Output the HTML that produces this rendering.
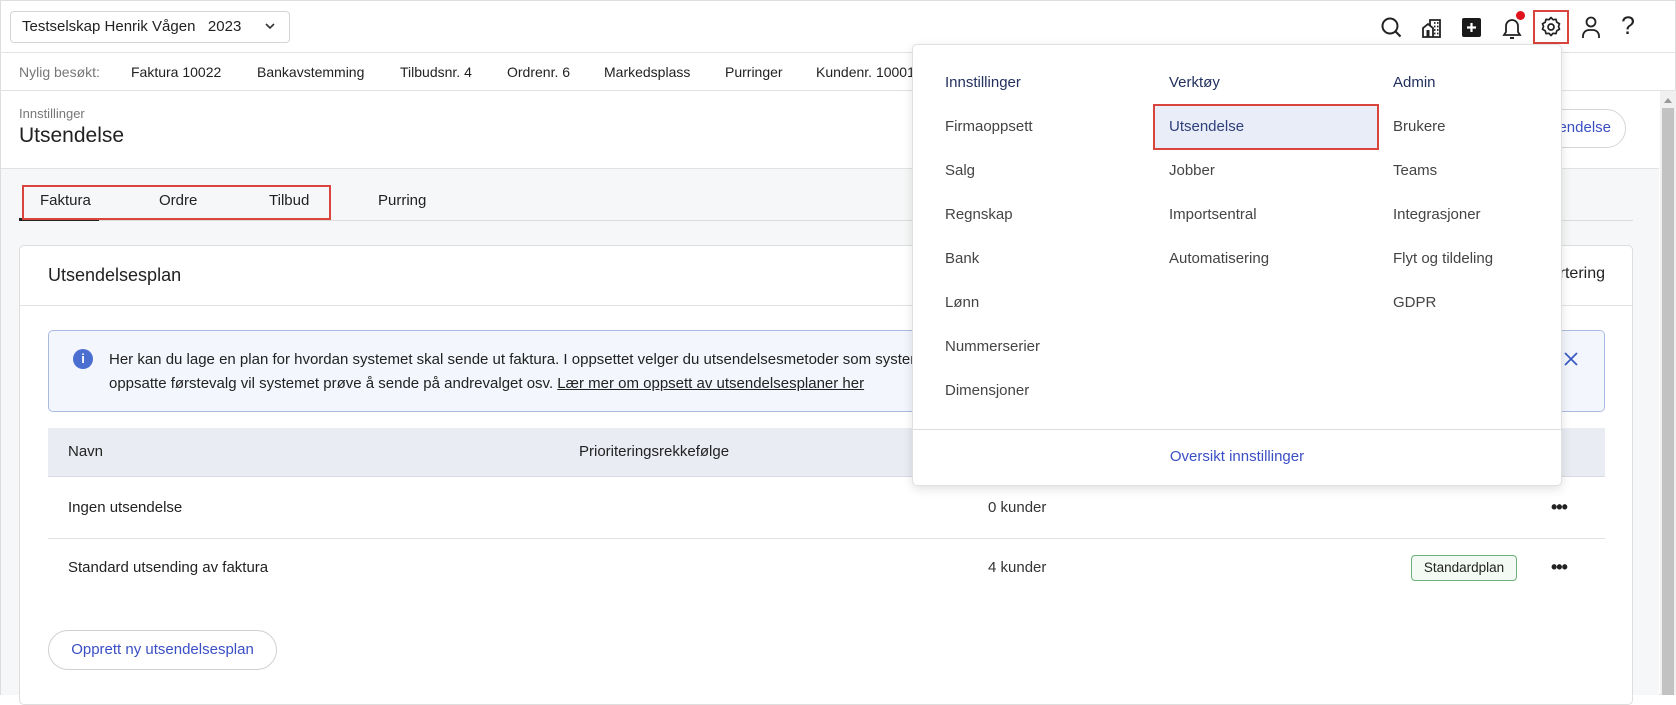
<!DOCTYPE html>
<html><head><meta charset="utf-8"><style>
*{margin:0;padding:0;box-sizing:border-box}
body{width:1676px;height:695px;overflow:hidden;font-family:"Liberation Sans",sans-serif;color:#222;background:#fff;position:relative;font-size:15px}
.a{position:absolute;white-space:nowrap}
</style></head><body>
<div class="a" style="left:0;top:0;width:1676px;height:695px;border:1px solid #ddd"></div>
<div class="a" style="left:10px;top:11px;width:280px;height:32px;border:1px solid #d4d4d4;border-radius:4px"></div>
<div class="a" style="left:22px;top:18px;font-size:15px">Testselskap Henrik Vågen&nbsp;&nbsp; 2023</div>
<svg class="a" style="left:265px;top:22px" width="10" height="8" viewBox="0 0 10 8"><path d="M1 2l4 4 4-4" stroke="#333" stroke-width="1.6" fill="none"/></svg>
<div class="a" style="left:0;top:52px;width:1676px;height:1px;background:#e2e2e2"></div>
<svg class="a" style="left:1380px;top:16px" width="24" height="24" viewBox="0 0 24 24"><circle cx="10" cy="10" r="7.5" stroke="#222" stroke-width="2" fill="none"/><path d="M15.5 15.5l5 5" stroke="#222" stroke-width="2.2"/></svg>
<svg class="a" style="left:1421px;top:17px" width="22" height="22" viewBox="0 0 22 22"><path d="M2 20V11l5-4 5 4v9zM9 9V3h10v17h-7" stroke="#222" stroke-width="1.8" fill="none"/><rect x="5.5" y="13" width="3" height="7" fill="#222"/><path d="M13 6h1.5M16 6h1.5M13 9.5h1.5M16 9.5h1.5M13 13h1.5M16 13h1.5M13 16.5h1.5M16 16.5h1.5" stroke="#222" stroke-width="1.8"/></svg>
<div class="a" style="left:1462px;top:18px;width:19px;height:19px;background:#1a1a1a;border-radius:2px"></div>
<svg class="a" style="left:1462px;top:18px" width="19" height="19"><path d="M9.5 5v9M5 9.5h9" stroke="#fff" stroke-width="2.2"/></svg>
<svg class="a" style="left:1500px;top:15px" width="24" height="26" viewBox="0 0 24 26"><path d="M4 20h16l-2-3V11a6 6 0 0 0-12 0v6z" stroke="#222" stroke-width="1.8" fill="none"/><path d="M10 23h4" stroke="#222" stroke-width="2"/></svg>
<div class="a" style="left:1516px;top:11px;width:9px;height:9px;border-radius:50%;background:#e0121c"></div>
<div class="a" style="left:1533px;top:10px;width:36px;height:34px;border:2px solid #d9443d"></div>
<svg class="a" style="left:1539px;top:15px" width="24" height="24" viewBox="0 0 24 24"><path d="M12 2.5l2 2.2 3-.3.8 2.9 2.7 1.4-1 2.8 1 2.8-2.7 1.4-.8 2.9-3-.3-2 2.2-2-2.2-3 .3-.8-2.9-2.7-1.4 1-2.8-1-2.8 2.7-1.4.8-2.9 3 .3z" stroke="#222" stroke-width="1.7" fill="none" stroke-linejoin="round"/><circle cx="12" cy="12" r="3" stroke="#222" stroke-width="1.7" fill="none"/></svg>
<svg class="a" style="left:1580px;top:15px" width="22" height="24" viewBox="0 0 22 24"><circle cx="11" cy="7" r="4.5" stroke="#222" stroke-width="1.8" fill="none"/><path d="M3 23v-2a6 6 0 0 1 6-6h4a6 6 0 0 1 6 6v2" stroke="#222" stroke-width="1.8" fill="none"/></svg>
<div class="a" style="left:1621px;top:12px;font-size:25px;color:#222">?</div>
<div class="a" style="top:64px;left:19px;font-size:14px;color:#777">Nylig besøkt:</div>
<div class="a" style="top:64px;left:131px;font-size:14px">Faktura 10022</div>
<div class="a" style="top:64px;left:257px;font-size:14px">Bankavstemming</div>
<div class="a" style="top:64px;left:400px;font-size:14px">Tilbudsnr. 4</div>
<div class="a" style="top:64px;left:507px;font-size:14px">Ordrenr. 6</div>
<div class="a" style="top:64px;left:604px;font-size:14px">Markedsplass</div>
<div class="a" style="top:64px;left:725px;font-size:14px">Purringer</div>
<div class="a" style="top:64px;left:816px;font-size:14px">Kundenr. 10001</div>
<div class="a" style="left:0;top:90px;width:1676px;height:1px;background:#e2e2e2"></div>
<div class="a" style="left:19px;top:106px;font-size:13px;color:#777">Innstillinger</div>
<div class="a" style="left:19px;top:124px;font-size:21px;color:#222">Utsendelse</div>
<div class="a" style="left:1480px;top:109px;width:146px;height:39px;border:1px solid #d6d6d6;border-radius:20px;background:#fff"></div>
<div class="a" style="left:1480px;top:119px;width:131px;text-align:right;font-size:15px;color:#3b4fc4">Ny utsendelse</div>
<div class="a" style="left:1px;top:168px;width:1658px;height:527px;background:#f6f7f8;border-top:1px solid #e2e2e2"></div>
<div class="a" style="left:1660px;top:91px;width:16px;height:604px;background:#f0f0f0"></div>
<div class="a" style="left:1662px;top:108px;width:12px;height:587px;background:#c2c2c2"></div>
<svg class="a" style="left:1663px;top:96px" width="10" height="8"><path d="M1 7l4-5 4 5z" fill="#999"/></svg>
<div class="a" style="left:19px;top:220px;width:1614px;height:1px;background:#dcdcdc"></div>
<div class="a" style="left:19px;top:218px;width:80px;height:3px;background:#222"></div>
<div class="a" style="left:40px;top:192px;font-size:15px">Faktura</div>
<div class="a" style="left:159px;top:192px;font-size:15px">Ordre</div>
<div class="a" style="left:269px;top:192px;font-size:15px">Tilbud</div>
<div class="a" style="left:378px;top:192px;font-size:15px">Purring</div>
<div class="a" style="left:22px;top:185px;width:309px;height:35px;border:2px solid #d9443d"></div>
<div class="a" style="left:19px;top:245px;width:1614px;height:460px;background:#fff;border:1px solid #dedede;border-radius:5px"></div>
<div class="a" style="left:48px;top:265px;font-size:18px">Utsendelsesplan</div>
<div class="a" style="left:1400px;top:265px;width:205px;text-align:right;font-size:16px">Sortering</div>
<div class="a" style="left:20px;top:305px;width:1612px;height:1px;background:#e2e2e2"></div>
<div class="a" style="left:48px;top:330px;width:1557px;height:82px;background:#f3f6fd;border:1px solid #a9bbe0;border-radius:5px;overflow:hidden">
<div class="a" style="left:24px;top:18px;width:20px;height:20px;border-radius:50%;background:#4a6fd1;color:#fff;font-size:13px;font-weight:bold;text-align:center;line-height:20px">i</div>
<div class="a" style="left:60px;top:17px;font-size:15px;line-height:24px">Her kan du lage en plan for hvordan systemet skal sende ut faktura. I oppsettet velger du utsendelsesmetoder som systemet skal prøve å sende i en bestemt rekkefølge. Hvis systemet ikke lykkes<br>oppsatte førstevalg vil systemet prøve å sende på andrevalget osv. <u>Lær mer om oppsett av utsendelsesplaner her</u></div>
<div class="a" style="left:1500px;top:0;width:56px;height:80px;background:#f3f6fd"></div>
<svg class="a" style="left:1514px;top:20px" width="16" height="16"><path d="M2 2l12 12M14 2L2 14" stroke="#3b5cc4" stroke-width="1.8"/></svg>
</div>
<div class="a" style="left:48px;top:428px;width:1557px;height:49px;background:#e9ecf3;border-bottom:1px solid #d8dbe2"></div>
<div class="a" style="left:68px;top:443px;font-size:15px">Navn</div>
<div class="a" style="left:579px;top:443px;font-size:15px">Prioriteringsrekkefølge</div>
<div class="a" style="left:988px;top:443px;font-size:15px">Kunder</div>
<div class="a" style="left:68px;top:499px;font-size:15px">Ingen utsendelse</div>
<div class="a" style="left:988px;top:499px;font-size:15px;color:#333">0 kunder</div>
<div class="a" style="left:1551px;top:497px;font-size:18px;font-weight:bold;letter-spacing:-1px">•••</div>
<div class="a" style="left:48px;top:538px;width:1557px;height:1px;background:#e2e2e2"></div>
<div class="a" style="left:68px;top:559px;font-size:15px">Standard utsending av faktura</div>
<div class="a" style="left:988px;top:559px;font-size:15px;color:#333">4 kunder</div>
<div class="a" style="left:1411px;top:555px;width:106px;height:26px;border:1px solid #6fb07a;border-radius:4px;background:#f2faf3;font-size:13.5px;text-align:center;line-height:24px">Standardplan</div>
<div class="a" style="left:1551px;top:557px;font-size:18px;font-weight:bold;letter-spacing:-1px">•••</div>
<div class="a" style="left:48px;top:630px;width:229px;height:40px;border:1px solid #d0d0d0;border-radius:20px;background:#fff;font-size:15px;color:#3b4fc4;text-align:center;line-height:38px">Opprett ny utsendelsesplan</div>
<div class="a" style="left:912px;top:44px;width:650px;height:442px;background:#fff;border:1px solid #e0e0e0;border-radius:5px;box-shadow:0 3px 10px rgba(0,0,0,.12)"></div>
<div class="a" style="left:913px;top:429px;width:648px;height:1px;background:#dcdcdc"></div>
<div class="a" style="left:1153px;top:104px;width:226px;height:46px;background:#e9edf8;border:2px solid #d9443d"></div>
<div class="a" style="left:945px;top:74px;font-size:15px;color:#23305e">Innstillinger</div>
<div class="a" style="left:1169px;top:74px;font-size:15px;color:#23305e">Verktøy</div>
<div class="a" style="left:1393px;top:74px;font-size:15px;color:#23305e">Admin</div>
<div class="a" style="left:945px;top:105px;font-size:15px;color:#444;line-height:44px">Firmaoppsett<br>Salg<br>Regnskap<br>Bank<br>Lønn<br>Nummerserier<br>Dimensjoner</div>
<div class="a" style="left:1169px;top:105px;font-size:15px;color:#444;line-height:44px"><span style="color:#2e3f7a">Utsendelse</span><br>Jobber<br>Importsentral<br>Automatisering</div>
<div class="a" style="left:1393px;top:105px;font-size:15px;color:#444;line-height:44px">Brukere<br>Teams<br>Integrasjoner<br>Flyt og tildeling<br>GDPR</div>
<div class="a" style="left:912px;top:448px;width:650px;text-align:center;font-size:15px;color:#3b4fc4">Oversikt innstillinger</div>
</body></html>
